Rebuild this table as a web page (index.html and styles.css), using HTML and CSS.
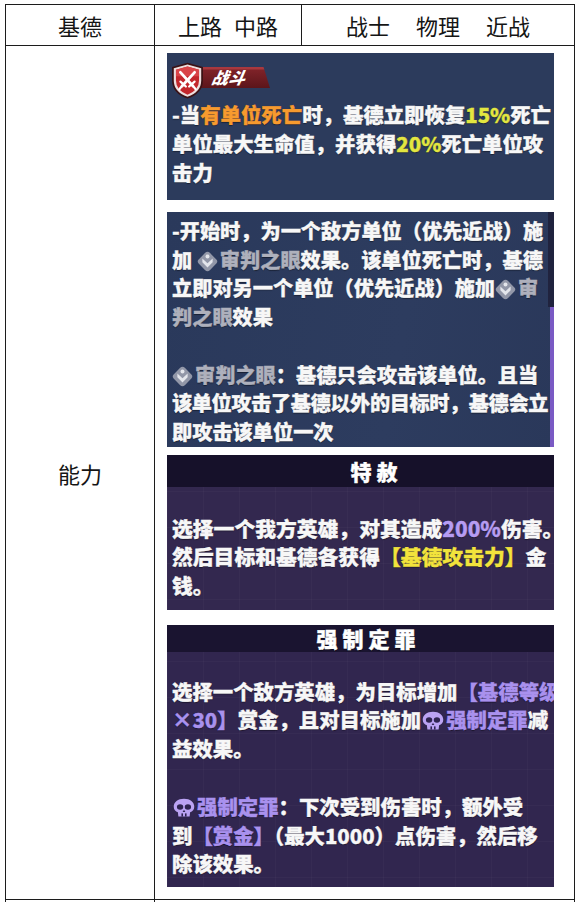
FILE: index.html
```html
<!DOCTYPE html>
<html lang="zh-CN">
<head>
<meta charset="utf-8">
<title>基德</title>
<link rel="stylesheet" href="styles.css">
</head>
<body>
<table class="grid">
  <colgroup><col class="w1"><col class="w2"><col class="w3"></colgroup>
  <tr class="head">
    <td>基德</td>
    <td>上路<span class="sp1"></span>中路</td>
    <td>战士<span class="sp2"></span>物理<span class="sp2"></span>近战</td>
  </tr>
  <tr class="main">
    <td class="label">能力</td>
    <td colspan="2" class="content">
      <div class="panel p1">
        <div class="badge">
          <svg class="shield" viewBox="0 0 30 34" width="33" height="37">
            <path d="M15 0.6 L29.2 4.6 L29.2 17 Q29.2 28.8 15 33.6 Q0.8 28.8 0.8 17 L0.8 4.6 Z" fill="#3a1114"/>
            <path d="M15 2.2 L27.6 5.8 L27.6 17 Q27.6 27.6 15 32 Q2.4 27.6 2.4 17 L2.4 5.8 Z" fill="#ecdede"/>
            <path d="M15 4.2 L25.6 7.2 L25.6 17 Q25.6 26 15 30 Q4.4 26 4.4 17 L4.4 7.2 Z" fill="#c3272c"/>
            <path d="M15 4.2 L25.6 7.2 L25.6 13 L4.4 13 L4.4 7.2 Z" fill="#d94448"/>
            <g stroke="#ffffff" stroke-width="2.6" stroke-linecap="round">
              <line x1="8.5" y1="9.5" x2="20" y2="22"/>
              <line x1="21.5" y1="9.5" x2="10" y2="22"/>
            </g>
            <g stroke="#ffffff" stroke-width="2" stroke-linecap="round">
              <line x1="16.5" y1="22.5" x2="21.5" y2="18"/>
              <line x1="13.5" y1="22.5" x2="8.5" y2="18"/>
              <line x1="20.5" y1="22.5" x2="22.5" y2="25"/>
              <line x1="9.5" y1="22.5" x2="7.5" y2="25"/>
            </g>
          </svg>
          <div class="banner"><span>战斗</span></div>
        </div>
        <div class="txt t1">-当<span class="orange">有单位死亡</span>时，基德立即恢复<span class="yellow">15%</span>死亡<br>单位最大生命值，并获得<span class="yellow">20%</span>死亡单位攻<br>击力</div>
      </div>

      <div class="panel p2">
        <div class="txt t2">-开始时，为一个敌方单位（优先近战）施<br>加 <svg class="eye" viewBox="0 0 18 18" width="21" height="21"><path d="M9 0.6 Q10.2 0.6 11.2 1.8 L16.8 7.6 Q18 9 16.8 10.4 L11.2 16.2 Q9 18.4 6.8 16.2 L1.2 10.4 Q0 9 1.2 7.6 L6.8 1.8 Q7.8 0.6 9 0.6 Z" fill="#9297a8"/><path d="M4.6 6.4 L9 10.4 L13.4 6.4 L13.4 9.6 L9 14.2 L4.6 9.6 Z" fill="#e4e6ec"/><circle cx="9" cy="4.8" r="1.7" fill="#e4e6ec"/></svg><span class="grey">审判之眼</span>效果。该单位死亡时，基德<br>立即对另一个单位（优先近战）施加<svg class="eye" viewBox="0 0 18 18" width="21" height="21"><path d="M9 0.6 Q10.2 0.6 11.2 1.8 L16.8 7.6 Q18 9 16.8 10.4 L11.2 16.2 Q9 18.4 6.8 16.2 L1.2 10.4 Q0 9 1.2 7.6 L6.8 1.8 Q7.8 0.6 9 0.6 Z" fill="#9297a8"/><path d="M4.6 6.4 L9 10.4 L13.4 6.4 L13.4 9.6 L9 14.2 L4.6 9.6 Z" fill="#e4e6ec"/><circle cx="9" cy="4.8" r="1.7" fill="#e4e6ec"/></svg><span class="grey">审</span><br><span class="grey">判之眼</span>效果<br><br><svg class="eye" viewBox="0 0 18 18" width="21" height="21"><path d="M9 0.6 Q10.2 0.6 11.2 1.8 L16.8 7.6 Q18 9 16.8 10.4 L11.2 16.2 Q9 18.4 6.8 16.2 L1.2 10.4 Q0 9 1.2 7.6 L6.8 1.8 Q7.8 0.6 9 0.6 Z" fill="#9297a8"/><path d="M4.6 6.4 L9 10.4 L13.4 6.4 L13.4 9.6 L9 14.2 L4.6 9.6 Z" fill="#e4e6ec"/><circle cx="9" cy="4.8" r="1.7" fill="#e4e6ec"/></svg><span class="grey">审判之眼</span>：基德只会攻击该单位。且当<br><span class="tight">该单位攻击了基德以外的目标时，基德会立</span><br>即攻击该单位一次</div>
      </div>

      <div class="panel p3">
        <div class="ptitle t-amnesty">特赦</div>
        <div class="txt t3">选择一个我方英雄，对其造成<span class="violet">200%</span>伤害。<br>然后目标和基德各获得<span class="gold">【基德攻击力】</span>金<br>钱。</div>
      </div>

      <div class="panel p4">
        <div class="ptitle t-guilt">强制定罪</div>
        <div class="txt t4">选择一个敌方英雄，为目标增加<span class="lav">【基德等级</span><br><span class="lav">×30】</span>赏金，且对目标施加<svg class="skull" viewBox="0 0 18 16" width="22" height="20"><path d="M9 0.4 C14 0.4 17.4 3.2 17.4 7 C17.4 9.4 16 10.9 14 11.5 L13.6 15 L4.4 15 L4 11.5 C2 10.9 0.6 9.4 0.6 7 C0.6 3.2 4 0.4 9 0.4 Z" fill="#bba3f3"/><ellipse cx="5.8" cy="7.2" rx="2.6" ry="2.2" fill="#2f2450"/><ellipse cx="12.2" cy="7.2" rx="2.6" ry="2.2" fill="#2f2450"/><path d="M9 9.4 L10.1 11.2 L7.9 11.2 Z" fill="#2f2450"/><rect x="6.9" y="12.4" width="1.3" height="2.6" fill="#2f2450"/><rect x="9.8" y="12.4" width="1.3" height="2.6" fill="#2f2450"/></svg><span class="lav">强制定罪</span>减<br>益效果。<br><br><svg class="skull" viewBox="0 0 18 16" width="22" height="20"><path d="M9 0.4 C14 0.4 17.4 3.2 17.4 7 C17.4 9.4 16 10.9 14 11.5 L13.6 15 L4.4 15 L4 11.5 C2 10.9 0.6 9.4 0.6 7 C0.6 3.2 4 0.4 9 0.4 Z" fill="#bba3f3"/><ellipse cx="5.8" cy="7.2" rx="2.6" ry="2.2" fill="#2f2450"/><ellipse cx="12.2" cy="7.2" rx="2.6" ry="2.2" fill="#2f2450"/><path d="M9 9.4 L10.1 11.2 L7.9 11.2 Z" fill="#2f2450"/><rect x="6.9" y="12.4" width="1.3" height="2.6" fill="#2f2450"/><rect x="9.8" y="12.4" width="1.3" height="2.6" fill="#2f2450"/></svg><span class="lav">强制定罪</span>：下次受到伤害时，额外受<br>到<span class="lav">【赏金】</span>（最大1000）点伤害，然后移<br>除该效果。</div>
      </div>
    </td>
  </tr>
  <tr class="next">
    <td></td>
    <td colspan="2"></td>
  </tr>
</table>
</body>
</html>
```

FILE: styles.css
```css
html, body {
  margin: 0;
  background: #ffffff;
}
body {
  padding: 4px 0 0 5px;
  font-family: "Noto Sans CJK SC", "Noto Sans", sans-serif;
}

.grid {
  border-collapse: collapse;
  table-layout: fixed;
  width: 569px;
}
.w1 { width: 149px; }
.w2 { width: 147px; }
.w3 { width: 273px; }

.grid td {
  border: 1px solid #1c1c1c;
  padding: 0;
}

.head td {
  height: 40px;
  text-align: center;
  vertical-align: middle;
  font-size: 22px;
  font-weight: 400;
  color: #151515;
  line-height: 1;
}
.sp1 { display: inline-block; width: 12px; }
.sp2 { display: inline-block; width: 26px; }

.label {
  text-align: center;
  vertical-align: middle;
  font-size: 22px;
  color: #151515;
}

.content {
  vertical-align: top;
  padding: 7px 0 12px 12px !important;
}

.next td { height: 40px; }

.panel {
  width: 387px;
  box-sizing: border-box;
  overflow: hidden;
  white-space: nowrap;
  color: #f7f7f7;
  font-weight: 900;
  position: relative;
}

.txt {
  padding-left: 5px;
  font-size: 20.4px;
  -webkit-text-stroke: 0.35px currentColor;
  text-shadow: 0 1px 1px rgba(0, 0, 0, 0.45);
}

/* panel 1 */
.p1 {
  height: 147px;
  margin-bottom: 12px;
  background: #2c3b5c;
  padding-top: 9px;
}
.badge {
  display: flex;
  align-items: flex-start;
  height: 37px;
  padding-left: 4px;
}
.shield {
  display: block;
  position: relative;
  z-index: 1;
  flex: none;
}
.banner {
  margin-left: -6px;
  margin-top: 5px;
  width: 72px;
  height: 21px;
  background: linear-gradient(#a8383e 0, #a8383e 2px, #7e2228 3px, #5c151a 100%);
  clip-path: polygon(0 0, 91% 0, 100% 100%, 0 100%);
  box-sizing: border-box;
  padding-left: 14px;
}
.banner span {
  display: block;
  font-size: 16.5px;
  line-height: 21px;
  font-style: italic;
  font-weight: 900;
  color: #ffffff;
  letter-spacing: 0.5px;
  transform: skewX(-10deg);
}
.t1 {
  margin-top: 1px;
  line-height: 29px;
}

.orange { color: #f79a2e; }
.yellow { color: #e3e640; }

/* panel 2 */
.p2 {
  height: 235px;
  margin-bottom: 8px;
  background: linear-gradient(100deg, #2a395b 0%, #2d3c5f 60%, #2a385a 100%);
  padding-top: 5px;
}
.p2::after {
  content: "";
  position: absolute;
  right: 0;
  top: 95px;
  bottom: 0;
  width: 4px;
  background: #7a5ac4;
}
.p2::before {
  content: "";
  position: absolute;
  right: 0;
  top: 0;
  height: 95px;
  width: 6px;
  background: #20233e;
}
.t2 {
  line-height: 28.7px;
  font-size: 20.2px;
}
.tight { letter-spacing: -0.4px; }
.grey { color: #aeb0bc; }
.eye {
  vertical-align: -4px;
  margin: 0 2px 0 0;
}

/* panel 3 & 4 */
.p3, .p4 {
  background-color: #33284f;
  background-image:
    linear-gradient(rgba(255, 255, 255, 0.025) 1px, transparent 1px),
    linear-gradient(90deg, rgba(255, 255, 255, 0.025) 1px, transparent 1px);
  background-size: 36px 36px;
}
.p3 {
  height: 155px;
  margin-bottom: 15px;
}
.p4 {
  height: 262px;
  background-color: #31264f;
}
.ptitle {
  background: #16112a;
  color: #ffffff;
  text-align: center;
  font-weight: 900;
  font-size: 21px;
  letter-spacing: 5px;
  -webkit-text-stroke: 0.4px #ffffff;
  text-shadow: 0 1px 1px rgba(0, 0, 0, 0.6);
}
.t-amnesty {
  height: 32px;
  line-height: 32px;
  padding-left: 32px;
}
.t-guilt {
  line-height: 27px;
  padding-left: 16px;
  background: #1a1430;
}
.t3 {
  padding-top: 26.5px;
  line-height: 28.5px;
  font-size: 20.8px;
}
.t4 {
  padding-top: 24.6px;
  line-height: 28.8px;
  font-size: 20.4px;
}
.violet { color: #b69cf2; }
.gold { color: #f2e33c; }
.lav { color: #a991ee; }
.skull {
  vertical-align: -3px;
  margin: 0 2px 0 1px;
}
```
